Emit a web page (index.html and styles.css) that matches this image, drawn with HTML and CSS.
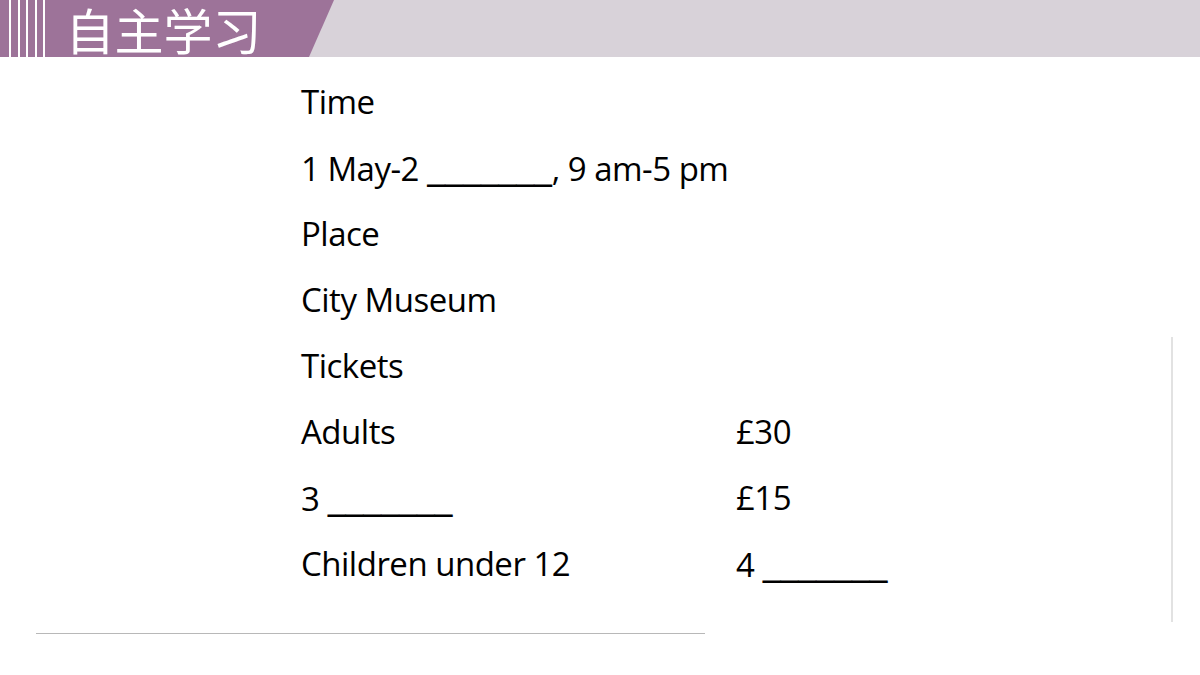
FILE: index.html
```html
<!DOCTYPE html>
<html lang="zh">
<head>
<meta charset="utf-8">
<link rel="stylesheet" href="styles.css">
</head>
<body>
<div class="page">
  <header class="banner">
    <div class="tab">
      <div class="stripes"><span></span><span></span><span></span><span></span><span></span></div>
      <h1 class="title">自主学习</h1>
    </div>
  </header>
  <main class="content">
    <div class="sheet">
      <div class="row"><span class="c1">Time</span></div>
      <div class="row"><span class="c1">1 May-2 <span class="blank">_______</span>, 9 am-5 pm</span></div>
      <div class="row"><span class="c1">Place</span></div>
      <div class="row"><span class="c1">City Museum</span></div>
      <div class="row"><span class="c1">Tickets</span></div>
      <div class="row"><span class="c1">Adults</span><span class="c2">£30</span></div>
      <div class="row"><span class="c1">3 <span class="blank">_______</span></span><span class="c2">£15</span></div>
      <div class="row"><span class="c1">Children under 12</span><span class="c2">4 <span class="blank">_______</span></span></div>
    </div>
    <div class="rule-right"></div>
    <div class="rule-bottom"></div>
  </main>
</div>
</body>
</html>
```
FILE: styles.css
```css
html, body { margin: 0; padding: 0; }
body { background: #fff; width: 1200px; height: 675px; overflow: hidden; }
.page { position: relative; width: 1200px; height: 675px; }
.banner { height: 57px; background: #d8d2d9; display: flex; }
.tab {
  position: relative;
  width: 309px; height: 57px; background: #9d7399;
  display: flex; align-items: center;
}
.tab::after {
  content: ""; position: absolute; left: 309px; top: 0; width: 0; height: 0;
  border-top: 57px solid #9d7399; border-right: 25px solid transparent;
}
.stripes { display: flex; gap: 6px; margin-left: 9px; height: 57px; }
.stripes span { width: 2px; height: 57px; background: #fff; margin-right: 0.5px; }
.title {
  margin: 0 0 0 20px; color: #fff; font-weight: 400;
  font-family: "Noto Sans CJK SC", sans-serif; font-size: 49px; line-height: 1;
  letter-spacing: 0; white-space: nowrap;
}
.content { position: relative; height: 618px; }
.sheet { padding: 11px 0 0 301px; }
.row {
  display: flex; height: 66px; align-items: center;
  font-family: "Open Sans", "Liberation Sans", sans-serif; font-size: 33px; color: #000;
  letter-spacing: -0.5px;
}
.blank { font-size: 42px; letter-spacing: -0.6px; line-height: 1; }
.c1 { width: 435px; }
.rule-right { position: absolute; left: 1171px; top: 280px; width: 2px; height: 285px; background: #e2e2e2; }
.rule-bottom { position: absolute; left: 36px; top: 576px; width: 669px; height: 1px; background: #b8b8b8; }
```
